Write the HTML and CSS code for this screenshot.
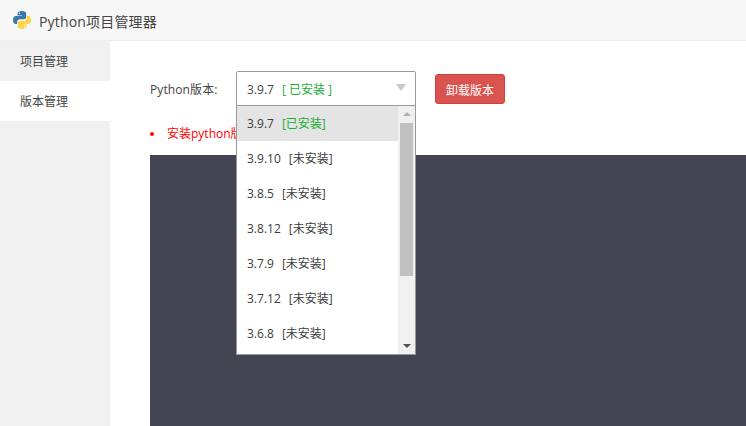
FILE: index.html
```html
<!DOCTYPE html>
<html lang="zh-CN">
<head>
<meta charset="utf-8">
<title>Python项目管理器</title>
<link rel="stylesheet" href="styles.css">
</head>
<body>
<div class="app">
  <header class="header">
    <svg class="logo" width="20" height="20" viewBox="0 0 20 20" aria-hidden="true">
      <path fill="#3b77a8" d="M9.9 1C7.2 1 5.6 1.9 5.6 3.4V5.4H10.1V6.1H3.9C2.2 6.1 1 7.6 1 10C1 12.4 2.1 14 3.7 14H5.2V11.8C5.2 10.2 6.5 9.2 8 9.2H11.9C13.2 9.2 14.2 8.2 14.2 6.9V3.4C14.2 1.9 12.5 1 9.9 1Z"/>
      <circle cx="7.4" cy="3.3" r=".8" fill="#fff"/>
      <path fill="#ffd445" d="M10.1 19C12.8 19 14.4 18.1 14.4 16.6V14.6H9.9V13.9H16.1C17.8 13.9 19 12.4 19 10C19 7.6 17.9 6 16.3 6H14.8V8.2C14.8 9.8 13.5 10.8 12 10.8H8.1C6.8 10.8 5.8 11.8 5.8 13.1V16.6C5.8 18.1 7.5 19 10.1 19Z"/>
      <circle cx="12.6" cy="16.7" r=".8" fill="#fff"/>
    </svg>
    <span class="app-title">Python项目管理器</span>
  </header>
  <div class="body">
    <nav class="sidebar">
      <div class="nav-item">项目管理</div>
      <div class="nav-item nav-item-active">版本管理</div>
    </nav>
    <main class="main">
      <div class="form-row">
        <label class="form-label">Python版本:</label>
        <div class="select">
          <div class="select-box">
            <span class="select-value">3.9.7<span class="installed select-tag">[ 已安装 ]</span></span>
            <span class="select-caret"></span>
          </div>
          <div class="select-menu">
            <ul class="option-list">
              <li class="option option-selected">3.9.7<span class="tag installed">[已安装]</span></li>
              <li class="option">3.9.10<span class="tag">[未安装]</span></li>
              <li class="option">3.8.5<span class="tag">[未安装]</span></li>
              <li class="option">3.8.12<span class="tag">[未安装]</span></li>
              <li class="option">3.7.9<span class="tag">[未安装]</span></li>
              <li class="option">3.7.12<span class="tag">[未安装]</span></li>
              <li class="option">3.6.8<span class="tag">[未安装]</span></li>
            </ul>
            <div class="scrollbar">
              <span class="arrow arrow-up"></span>
              <div class="track"><div class="thumb"></div></div>
              <span class="arrow arrow-down"></span>
            </div>
          </div>
        </div>
        <button class="danger-btn" type="button">卸载版本</button>
      </div>
      <ul class="notes">
        <li class="note">安装python版本</li>
      </ul>
      <div class="console"></div>
    </main>
  </div>
</div>
</body>
</html>
```
FILE: styles.css
```css
* { box-sizing: border-box; }
html, body { margin: 0; padding: 0; height: 100%; overflow: hidden; }
body {
  background: #fff;
  color: #444;
  font-family: "Open Sans", "Noto Sans CJK SC", sans-serif;
  font-size: 12px;
}
.app { display: flex; flex-direction: column; height: 426px; }
.header {
  flex: none;
  height: 41px;
  display: flex;
  align-items: center;
  padding-left: 12px;
  background: #f7f7f7;
  border-bottom: 1px solid #eee;
}
.logo { flex: none; margin-right: 7px; }
.app-title { font-size: 14px; letter-spacing: .17px; color: #444; padding-top: 1px; }
.body { flex: 1; display: flex; min-height: 0; }
.sidebar { flex: none; width: 110px; background: #f0f0f0; }
.nav-item { height: 40px; line-height: 42px; padding-left: 20px; color: #444; }
.nav-item-active { background: #fff; }
.main { flex: 1; min-width: 0; padding: 30px 0 0 40px; }
.form-row { display: flex; align-items: flex-start; height: 34px; }
.form-label { width: 86px; flex: none; letter-spacing: .1px; line-height: 37px; }
.select { position: relative; width: 180px; flex: none; }
.select-box {
  height: 35px;
  border: 1px solid #999;
  border-radius: 2px 2px 0 0;
  background: #fff;
  display: flex;
  align-items: center;
  justify-content: space-between;
  padding: 1px 9px 0 10px;
}
.select-value { color: #444; }
.select-tag { margin-left: 8px; }
.installed { color: #1aad34; }
.select-caret {
  width: 0;
  height: 0;
  border-left: 5px solid transparent;
  border-right: 5px solid transparent;
  border-top: 7px solid #c8c8c8;
  margin-bottom: 4px;
}
.select-menu {
  position: absolute;
  left: 0;
  right: 0;
  top: 34px;
  height: 250px;
  background: #fff;
  border: 1px solid #999;
  display: flex;
}
.option-list { flex: 1; list-style: none; margin: 0; padding: 0; overflow: hidden; }
.option { height: 35px; line-height: 35px; padding-left: 10px; color: #3c3c3c; }
.option-selected { background: #e4e4e4; }
.tag { margin-left: 8px; }
.scrollbar {
  flex: none;
  width: 17px;
  background: #f0f0f0;
  display: flex;
  flex-direction: column;
  align-items: center;
}
.arrow { flex: none; width: 0; height: 0; border-left: 4px solid transparent; border-right: 4px solid transparent; }
.arrow-up { border-bottom: 4px solid #b0b0b0; margin: 6px 0 7px; }
.arrow-down { border-top: 4px solid #505050; margin: 7px 0 6px; }
.track { flex: 1; width: 100%; padding: 0 2px; }
.thumb { height: 153px; background: #c0c0c0; }
.danger-btn {
  flex: none;
  width: 70px;
  height: 30px;
  margin: 3px 0 0 19px;
  padding: 1px 0 0;
  background: #d9534f;
  border: 1px solid #d43f3a;
  border-radius: 3px;
  color: #fff;
  font: inherit;
}
.notes { margin: 19px 0 0; padding: 0; height: 31px; color: #f00; list-style: none; }
.note { display: flex; align-items: center; line-height: 20px; }
.note::before {
  content: "";
  flex: none;
  width: 4px;
  height: 4px;
  border-radius: 50%;
  background: #f00;
  margin-right: 13px;
}
.console { height: 271px; background: #454452; }
```
